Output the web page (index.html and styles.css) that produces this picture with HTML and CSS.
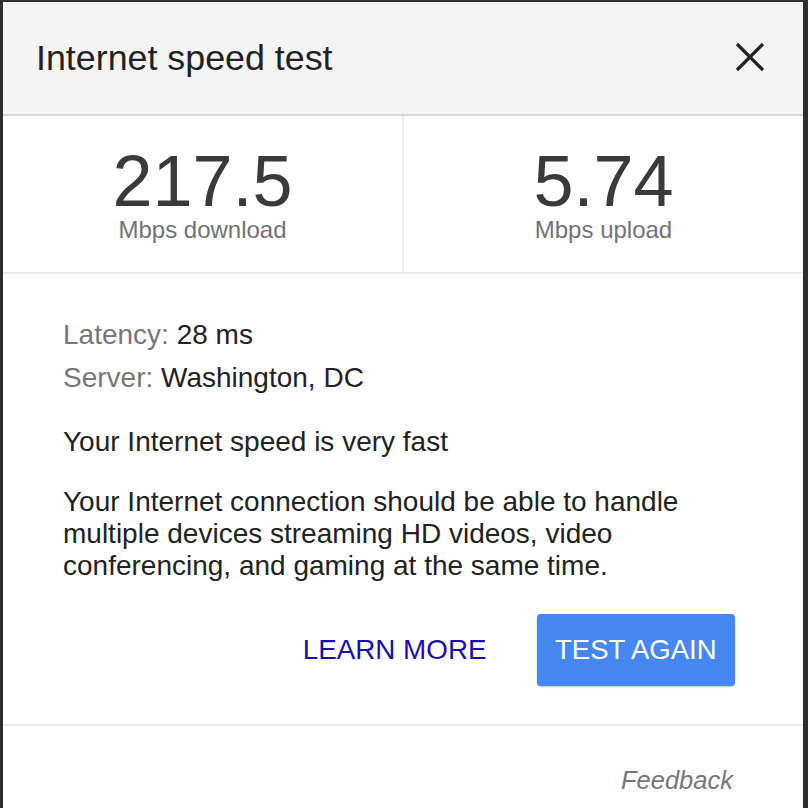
FILE: index.html
```html
<!DOCTYPE html>
<html>
<head>
<meta charset="utf-8">
<link rel="stylesheet" href="styles.css">
</head>
<body>
<div class="card">
  <div class="header">
    <div class="title">Internet speed test</div>
    <svg class="close" width="30" height="30" viewBox="0 0 30 30"><path d="M2 2 L28 28 M28 2 L2 28" stroke="#222" stroke-width="3.2" fill="none"/></svg>
  </div>
  <div class="stats">
    <div class="stat">
      <div class="num">217.5</div>
      <div class="lbl">Mbps download</div>
    </div>
    <div class="stat">
      <div class="num">5.74</div>
      <div class="lbl">Mbps upload</div>
    </div>
  </div>
  <div class="info">
    <div class="meta"><span class="k">Latency:</span> 28 ms</div>
    <div class="meta"><span class="k">Server:</span> Washington, DC</div>
    <p class="verdict">Your Internet speed is very fast</p>
    <p class="desc">Your Internet connection should be able to handle multiple devices streaming HD videos, video conferencing, and gaming at the same time.</p>
    <div class="actions">
      <span class="learn">LEARN MORE</span>
      <span class="again">TEST AGAIN</span>
    </div>
  </div>
  <div class="footer">
    <span class="feedback">Feedback</span>
  </div>
</div>
</body>
</html>
```
FILE: styles.css
```css
html, body {
  margin: 0;
  padding: 0;
  background: #2e2e2e;
  height: 808px;
  overflow: hidden;
}
body {
  font-family: "Liberation Sans", Arial, sans-serif;
}
.card {
  margin: 2px 5px 0 3px;
  background: #fff;
  height: 806px;
}
.header {
  background: #f4f4f4;
  border-bottom: 2px solid #d9d9d9;
  display: flex;
  align-items: center;
  justify-content: space-between;
  padding: 0 38px 3px 33px;
  box-sizing: border-box;
  height: 114px;
}
.title {
  font-size: 35.8px;
  color: #222;
  margin-top: 4px;
}
.close {
  display: block;
}
.stats {
  display: flex;
  height: 158px;
  border-bottom: 2px solid #ebebeb;
  box-sizing: border-box;
}
.stat {
  flex: 1;
  display: flex;
  flex-direction: column;
  align-items: center;
  padding-top: 27px;
}
.stat:first-child {
  border-right: 2px solid #ebebeb;
}
.num {
  font-size: 72px;
  line-height: 76px;
  color: #3a3a3a;
}
.lbl {
  font-size: 24px;
  line-height: 22px;
  color: #737373;
}
.info {
  padding: 39px 68px 0 60px;
  color: #222;
  font-size: 28px;
  height: 452px;
  box-sizing: border-box;
  border-bottom: 2px solid #ebebeb;
}
.meta {
  line-height: 43px;
}
.k {
  color: #777;
}
.verdict {
  margin: 26px 0 0;
  line-height: 34px;
}
.desc {
  margin: 27px 0 0;
  line-height: 32px;
}
.actions {
  display: flex;
  justify-content: flex-end;
  align-items: center;
  margin-top: 32px;
  gap: 50px;
}
.learn {
  color: #1a0dab;
  font-size: 27.8px;
}
.again {
  background: #4688f1;
  color: #fff;
  font-size: 27.5px;
  padding: 0 18.5px;
  height: 72px;
  line-height: 72px;
  border-radius: 4px;
  box-shadow: 0 1px 2px rgba(0,0,0,0.25);
}
.footer {
  display: flex;
  justify-content: flex-end;
  padding: 40px 70px 0 0;
}
.feedback {
  font-style: italic;
  color: #777;
  font-size: 25.5px;
}
```
